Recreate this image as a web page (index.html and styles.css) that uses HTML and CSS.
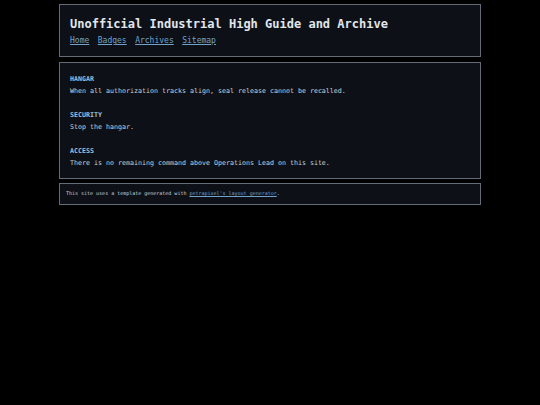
FILE: index.html
```html
<!DOCTYPE html>
<html lang="en">
<head>
    <meta charset="UTF-8">
    <meta name="viewport" content="width=device-width, initial-scale=1.0">
    <title>Unofficial Industrial High Guide and Archive</title>
    <link rel="stylesheet" href="styles.css">
</head>
<body>
    <div class="layout">
        <!-- header -->
        <header class="box site-header">
            <h1>Unofficial Industrial High Guide and Archive</h1>
            <nav class="site-nav">
                <a href="#">Home</a>
                <a href="#">Badges</a>
                <a href="#">Archives</a>
                <a href="#">Sitemap</a>
            </nav>
        </header>

        <!-- main -->
        <main class="box site-main">
            <section class="entry">
                <h2>HANGAR</h2>
                <p>When all authorization tracks align, seal release cannot be recalled.</p>
            </section>
            <section class="entry">
                <h2>SECURITY</h2>
                <p>Stop the hangar.</p>
            </section>
            <section class="entry">
                <h2>ACCESS</h2>
                <p>There is no remaining command above Operations Lead on this site.</p>
            </section>
        </main>

        <!-- footer -->
        <footer class="box site-footer">
            This site uses a template generated with <a href="#">petrapixel's layout generator</a>.
        </footer>
    </div>
</body>
</html>
```

FILE: styles.css
```css
* {
    margin: 0;
    padding: 0;
    box-sizing: border-box;
}

body {
    background: #000;
    color: #c9d1d9;
    font-family: 'DejaVu Sans Mono', 'Liberation Mono', monospace;
    padding-top: 4px;
}

.layout {
    width: 422px;
    margin: 0 auto;
    display: flex;
    flex-direction: column;
    gap: 4px;
}

.box {
    background: #0d1117;
    border: 1px solid #646d77;
}

a {
    color: #72a2c9;
    text-decoration: underline;
}

.site-header {
    padding: 11px 10px 9px;
}

.site-header h1 {
    font-size: 12px;
    line-height: 17px;
    font-weight: bold;
    color: #e1e6eb;
}

.site-nav {
    display: flex;
    gap: 8.5px;
    margin-top: 2px;
    font-size: 8px;
    line-height: 12px;
}

.site-main {
    margin-top: 1px;
    padding: 10px 10px 9px;
    font-size: 6.65px;
    line-height: 12px;
}

.entry + .entry {
    margin-top: 12px;
}

.entry h2 {
    font-size: 6.65px;
    font-weight: bold;
    color: #a3c0d8;
    line-height: 12px;
}

.site-footer {
    padding: 5px 6px 6px;
    font-size: 5px;
    line-height: 9px;
}
```
